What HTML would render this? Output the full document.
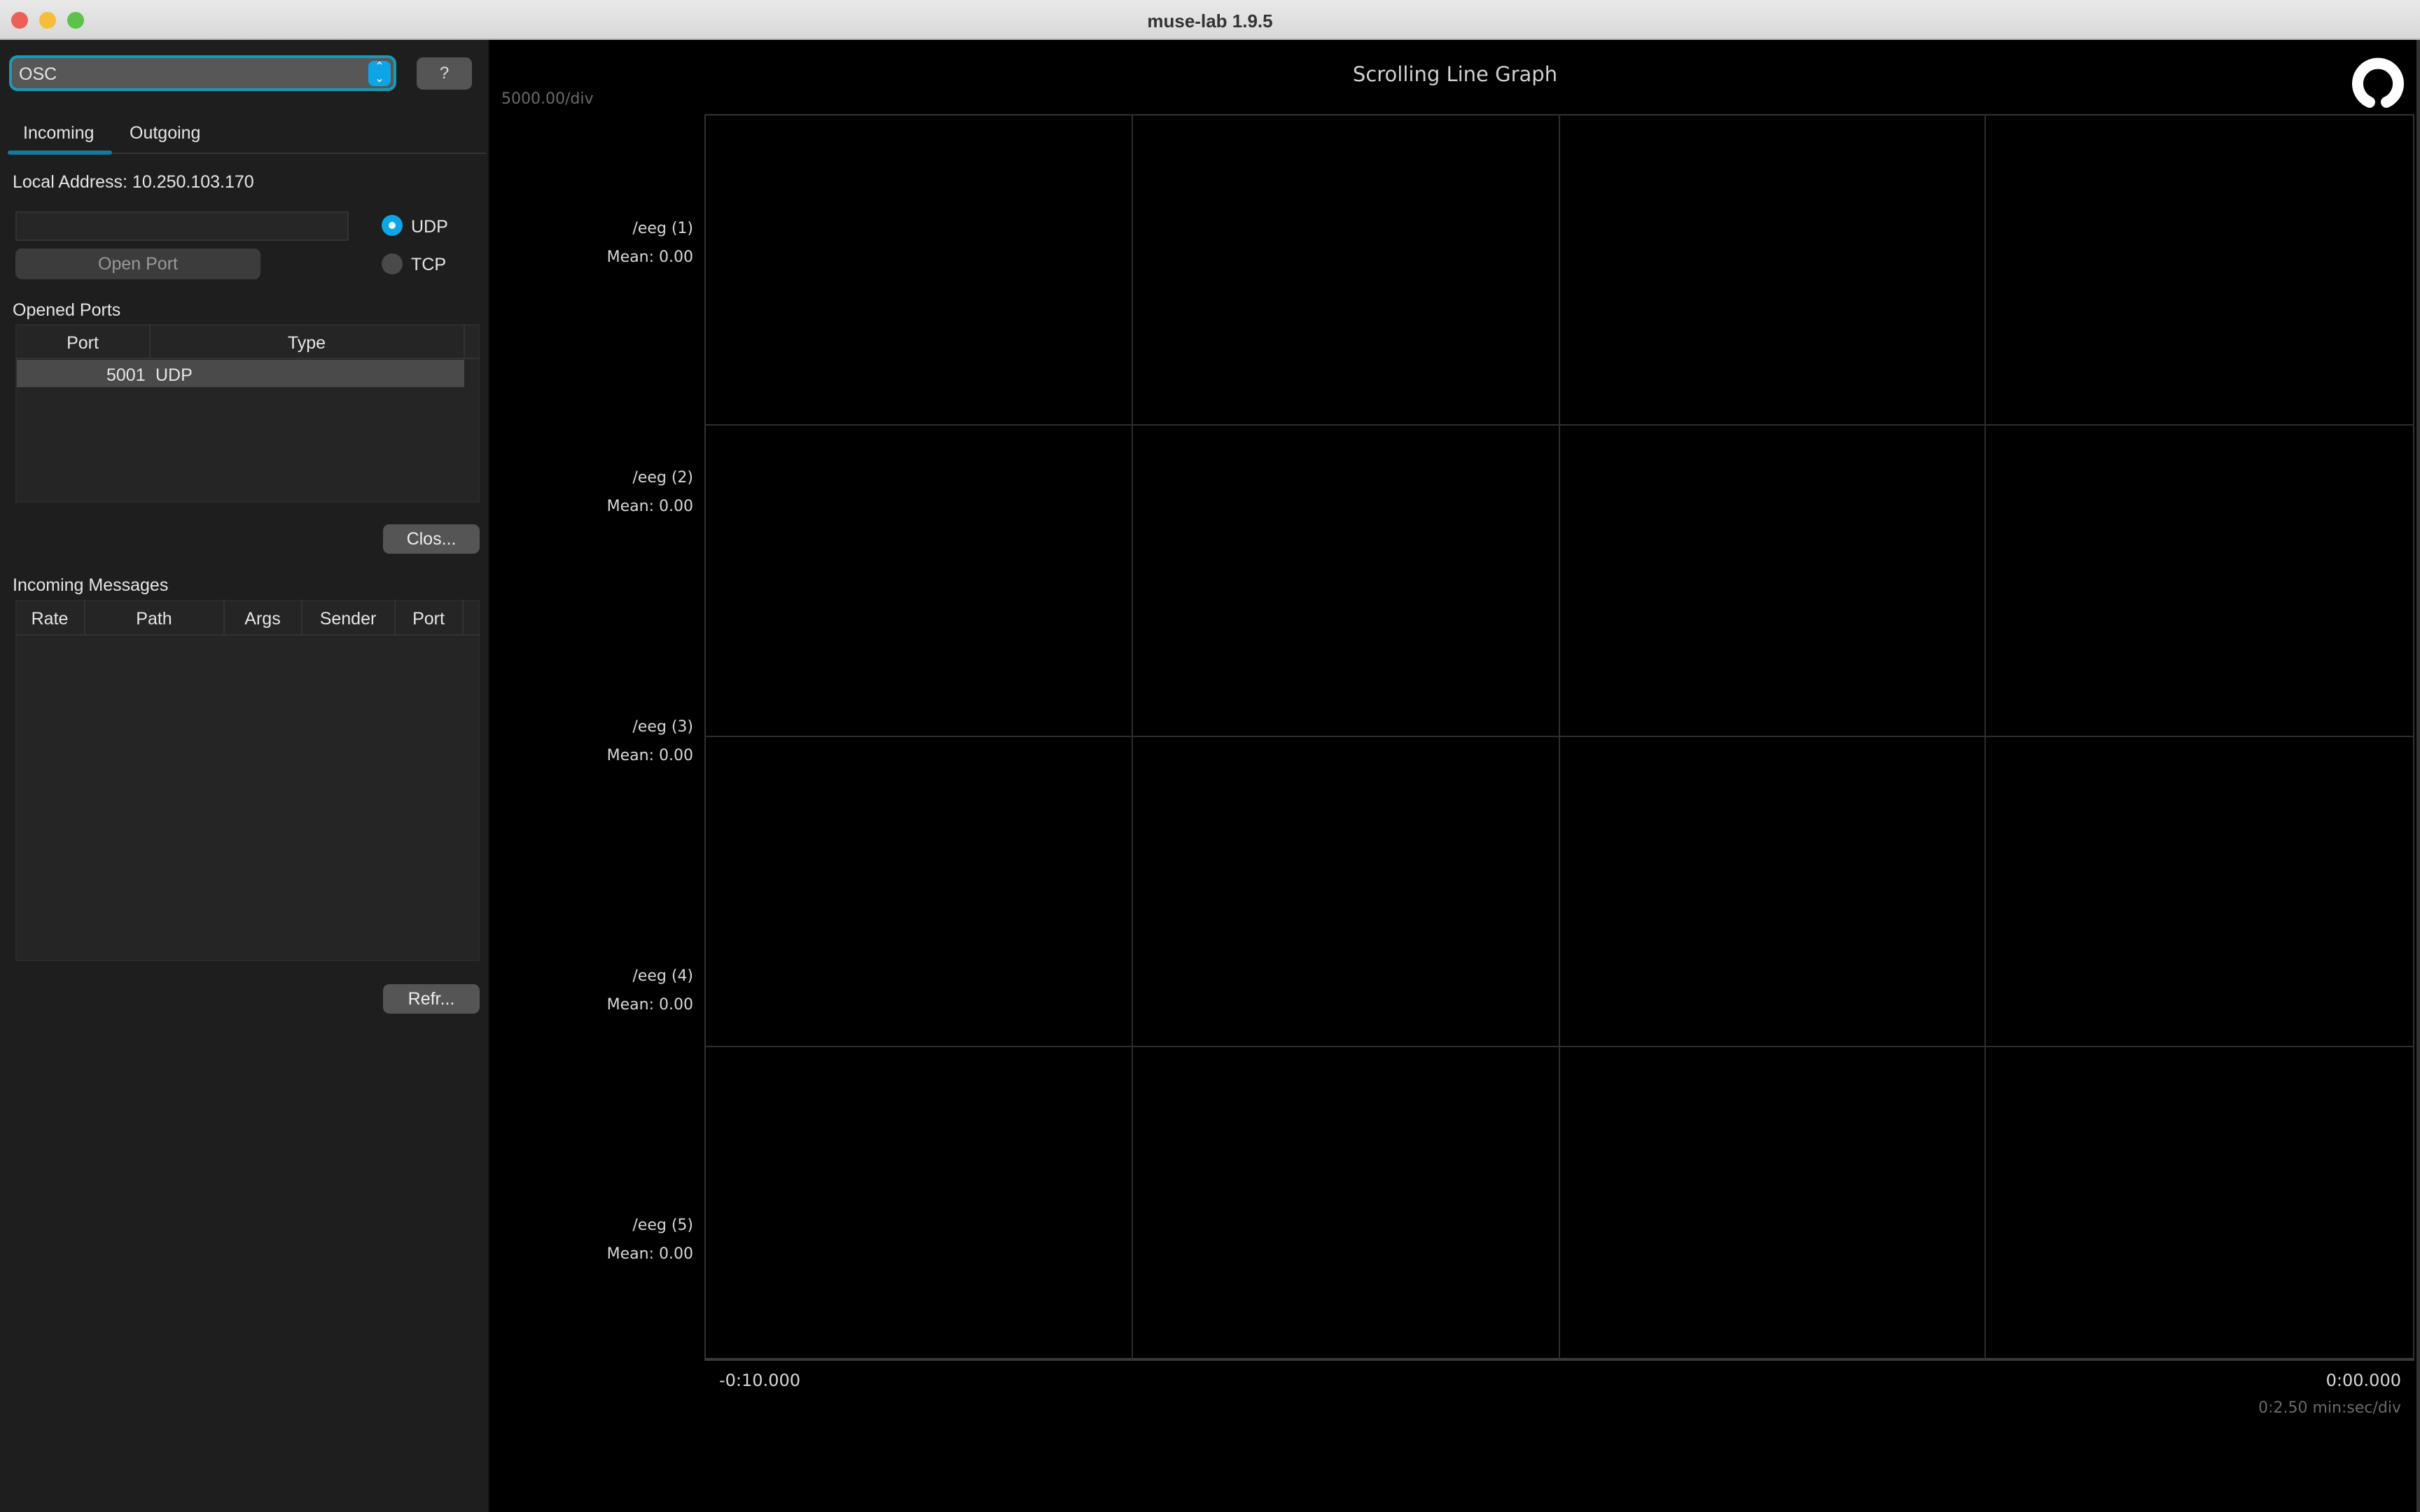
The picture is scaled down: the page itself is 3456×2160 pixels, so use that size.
<!DOCTYPE html>
<html><head><meta charset="utf-8"><style>
*{margin:0;padding:0;box-sizing:border-box}
body{width:3456px;height:2160px;background:#000;position:relative;overflow:hidden;font-family:"Liberation Sans",sans-serif}
.a{position:absolute}
.t{position:absolute;color:#e6e6e6;font-size:25px;white-space:nowrap;line-height:1;margin-top:2px}
.g{position:absolute;font-family:"DejaVu Sans",sans-serif;color:#d8d8d8;font-size:22px;white-space:nowrap;line-height:1;margin-top:3px}
.btn{position:absolute;background:#555;border-radius:9px;color:#eee;font-size:25px;display:flex;align-items:center;justify-content:center}
.hl{position:absolute;height:2px;background:#2e2e2e;left:1007px;width:2440px}
.vl{position:absolute;width:2px;background:#2e2e2e;top:163px;height:1779px}
</style></head><body>
<div class="a" style="left:0;top:0;width:3456px;height:57px;background:linear-gradient(#e9e9e9,#d8d8d8);border-bottom:2px solid #b8b8b8"></div>
<div class="a" style="left:16px;top:17px;width:24px;height:24px;border-radius:50%;background:#ee5f57"></div>
<div class="a" style="left:56px;top:17px;width:24px;height:24px;border-radius:50%;background:#f5bd3a"></div>
<div class="a" style="left:96px;top:17px;width:24px;height:24px;border-radius:50%;background:#5ec149"></div>
<div class="t" style="left:0;width:3456px;text-align:center;top:15px;color:#333;font-weight:bold;font-size:26px">muse-lab 1.9.5</div>

<div class="a" style="left:0;top:57px;width:699px;height:2103px;background:#1e1e1e;border-right:2px solid #111"></div>
<div class="a" style="left:13px;top:79px;width:553px;height:51px;border:4px solid #1a9bb5;border-radius:12px;background:#575757"></div>
<div class="t" style="left:27px;top:92px;font-size:25px">OSC</div>
<div class="a" style="left:526px;top:87px;width:32px;height:36px;border-radius:8px;background:#0ea5e6;color:#fff;font-size:16px;text-align:center;line-height:17px">&#8963;<br>&#8964;</div>
<div class="btn" style="left:595px;top:82px;width:79px;height:46px;font-size:24px;color:#ddd">?</div>

<div class="t" style="left:33px;top:176px">Incoming</div>
<div class="t" style="left:185px;top:176px">Outgoing</div>
<div class="a" style="left:11px;top:218px;width:683px;height:2px;background:#333"></div>
<div class="a" style="left:11px;top:215px;width:149px;height:6px;background:#147a9a;border-radius:3px"></div>

<div class="t" style="left:18px;top:246px">Local Address: 10.250.103.170</div>
<div class="a" style="left:22px;top:302px;width:476px;height:42px;background:#262626;border:2px solid #333"></div>
<div class="btn" style="left:22px;top:355px;width:350px;height:44px;background:#3c3c3c;color:#999">Open Port</div>
<div class="a" style="left:545px;top:307px;width:30px;height:30px;border-radius:50%;background:#0ea5e6"></div>
<div class="a" style="left:555px;top:317px;width:10px;height:10px;border-radius:50%;background:#dff"></div>
<div class="t" style="left:587px;top:310px">UDP</div>
<div class="a" style="left:545px;top:362px;width:30px;height:30px;border-radius:50%;background:#4a4a4a"></div>
<div class="t" style="left:587px;top:364px">TCP</div>

<div class="t" style="left:18px;top:429px">Opened Ports</div>
<div class="a" style="left:22px;top:463px;width:663px;height:255px;background:#252525;border:2px solid #2c2c2c"></div>
<div class="a" style="left:22px;top:511px;width:663px;height:2px;background:#333"></div>
<div class="a" style="left:213px;top:463px;width:2px;height:48px;background:#333"></div>
<div class="a" style="left:662px;top:463px;width:2px;height:48px;background:#333"></div>
<div class="t" style="left:22px;width:192px;text-align:center;top:476px">Port</div>
<div class="t" style="left:214px;width:448px;text-align:center;top:476px">Type</div>
<div class="a" style="left:24px;top:514px;width:639px;height:39px;background:#4a4a4a"></div>
<div class="t" style="left:152px;top:522px">5001</div>
<div class="t" style="left:222px;top:522px">UDP</div>
<div class="btn" style="left:547px;top:749px;width:138px;height:42px">Clos...</div>

<div class="t" style="left:18px;top:822px">Incoming Messages</div>
<div class="a" style="left:22px;top:857px;width:663px;height:516px;background:#252525;border:2px solid #2c2c2c"></div>
<div class="a" style="left:22px;top:906px;width:663px;height:2px;background:#333"></div>
<div class="a" style="left:120px;top:857px;width:2px;height:49px;background:#333"></div>
<div class="a" style="left:319px;top:857px;width:2px;height:49px;background:#333"></div>
<div class="a" style="left:430px;top:857px;width:2px;height:49px;background:#333"></div>
<div class="a" style="left:563px;top:857px;width:2px;height:49px;background:#333"></div>
<div class="a" style="left:660px;top:857px;width:2px;height:49px;background:#333"></div>
<div class="t" style="left:22px;width:98px;text-align:center;top:870px">Rate</div>
<div class="t" style="left:121px;width:198px;text-align:center;top:870px">Path</div>
<div class="t" style="left:320px;width:110px;text-align:center;top:870px">Args</div>
<div class="t" style="left:431px;width:132px;text-align:center;top:870px">Sender</div>
<div class="t" style="left:564px;width:96px;text-align:center;top:870px">Port</div>
<div class="btn" style="left:547px;top:1406px;width:138px;height:42px">Refr...</div>

<div class="a" style="left:3451px;top:57px;width:5px;height:2103px;background:#333"></div>
<div class="g" style="left:700px;width:2756px;text-align:center;top:89px;font-size:29px;color:#d0d0d0">Scrolling Line Graph</div>
<div class="g" style="left:716px;top:128px;color:#6a6a6a">5000.00/div</div>
<svg class="a" style="left:3356px;top:78px" width="80" height="80" viewBox="0 0 80 80"><path d="M28 68 A29 29 0 1 1 52 68" fill="none" stroke="#fff" stroke-width="16" stroke-linecap="round"/></svg>

<div class="a" style="left:1006px;top:163px;width:2442px;height:1781px;border:2px solid #333;border-bottom:4px solid #3a3a3a"></div>
<div class="vl" style="left:1616px"></div><div class="vl" style="left:2226px"></div><div class="vl" style="left:2834px"></div>
<div class="hl" style="top:606px"></div><div class="hl" style="top:1051px"></div><div class="hl" style="top:1494px"></div>

<div class="g" style="right:2466px;top:313px">/eeg (1)</div><div class="g" style="right:2466px;top:354px">Mean: 0.00</div>
<div class="g" style="right:2466px;top:669px">/eeg (2)</div><div class="g" style="right:2466px;top:710px">Mean: 0.00</div>
<div class="g" style="right:2466px;top:1025px">/eeg (3)</div><div class="g" style="right:2466px;top:1066px">Mean: 0.00</div>
<div class="g" style="right:2466px;top:1381px">/eeg (4)</div><div class="g" style="right:2466px;top:1422px">Mean: 0.00</div>
<div class="g" style="right:2466px;top:1737px">/eeg (5)</div><div class="g" style="right:2466px;top:1778px">Mean: 0.00</div>

<div class="g" style="left:1027px;top:1957px;font-size:24px">-0:10.000</div>
<div class="g" style="right:27px;top:1957px;font-size:24px">0:00.000</div>
<div class="g" style="right:27px;top:1998px;color:#6a6a6a">0:2.50 min:sec/div</div>
</body></html>
